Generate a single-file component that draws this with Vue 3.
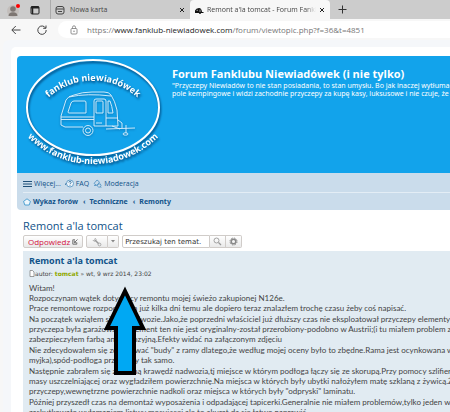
<template>
  <div class="browser">
    <header class="tab-strip">
      <button class="profile" type="button" aria-label="Profil">
        <svg viewBox="0 0 14 14" width="14" height="14">
          <circle cx="6" cy="8" r="6" fill="#c3bebb" />
          <circle cx="6" cy="6" r="2.800" fill="#7d7672" />
          <path d="M1.500 13q0-3.800 4.500-3.800t4.500 3.800z" fill="#7d7672" />
          <circle cx="11" cy="3" r="2" fill="#f00" />
        </svg>
      </button>
      <button class="workspaces" type="button" aria-label="Obszary robocze">
        <svg viewBox="0 0 10 10" width="10" height="10">
          <rect x="1" y="1.500" width="8" height="7.500" rx="1" fill="none" stroke="#222" />
          <path d="M1 2.500h8" stroke="#222" stroke-width="2" />
          <path d="M2.500 3v6" stroke="#222" stroke-width="1.500" />
        </svg>
      </button>
      <div class="tab">
        <svg viewBox="0 0 10 10" width="10" height="10">
          <rect x="1" y="1.500" width="8" height="7.500" rx="2" fill="none" stroke="#444" />
          <path d="M1 4h8M3 6.500h4" stroke="#444" />
        </svg>
        <span class="tab-title">Nowa karta</span>
        <button type="button" aria-label="Zamknij kartę">
          <svg viewBox="0 0 6 6" width="6" height="6"><path d="M1 1l4 4M5 1l-4 4" stroke="#222" /></svg>
        </button>
      </div>
      <div class="tab active">
        <svg viewBox="0 0 10 10" width="10" height="10">
          <path d="M1 8V5.500Q2 3 5 3q2.500 0 3 4h1.500v1H7a1 1 0 0 1-2 0H1z" fill="#111" />
          <path d="M2.500 5.300h1.500M6 4.500v2.500" stroke="#ddd" stroke-width=".7" />
        </svg>
        <span class="tab-title">Remont a'la tomcat - Forum Fankl</span>
        <button type="button" aria-label="Zamknij kartę">
          <svg viewBox="0 0 6 6" width="6" height="6"><path d="M1 1l4 4M5 1l-4 4" stroke="#222" /></svg>
        </button>
      </div>
      <button class="new-tab" type="button" aria-label="Nowa karta">
        <svg viewBox="0 0 9 9" width="9" height="9"><path d="M4.500 .5v8M.5 4.500h8" stroke="#333" /></svg>
      </button>
    </header>

    <div class="toolbar">
      <button class="back" type="button" aria-label="Wstecz">
        <svg viewBox="0 0 10 10" width="10" height="10">
          <path d="M9.500 5H1M4.800 1L.8 5l4 4" fill="none" stroke="#444" />
        </svg>
      </button>
      <button type="button" aria-label="Odśwież">
        <svg viewBox="0 0 10 10" width="10" height="10">
          <path d="M8.600 3A4.200 4.200 0 1 0 9.200 5M9 .5V3.300H6.200" fill="none" stroke="#444" />
        </svg>
      </button>
      <div class="address">
        <svg viewBox="0 0 8 10" width="8" height="10">
          <rect x="1" y="3.500" width="6" height="5.500" rx="1" fill="none" stroke="#777" stroke-width=".8" />
          <path d="M2.500 3.500V2.300a1.500 1.500 0 0 1 3 0v1.200" fill="none" stroke="#777" stroke-width=".8" />
          <circle cx="4" cy="6.200" r=".7" fill="#777" />
        </svg>
        <span>https://<b>www.fanklub-niewiadowek.com</b>/forum/viewtopic.php?f=36&amp;t=4851</span>
      </div>
    </div>

    <div class="page">
      <div class="wrap">
        <div class="headerbar">
          <a class="logo" href="#" aria-label="Wykaz forów">
            <svg viewBox="20 56 145 112" width="145" height="112">
              <defs>
                <path id="arc-top" d="M43 103A67 67 0 0 1 143 103" />
                <path id="arc-bottom" d="M24 133A92 92 0 0 0 162 133" />
              </defs>
              <g class="shadowed">
                <ellipse cx="93" cy="107.500" rx="66" ry="47.500" fill="none" stroke="#fff" stroke-width="2" />
                <text class="logo-text">
                  <textPath href="#arc-top" startOffset="50%">fanklub niewiadówek</textPath>
                </text>
                <text class="logo-text">
                  <textPath href="#arc-bottom" startOffset="50%">www.fanklub-niewiadowek.com</textPath>
                </text>
              </g>
              <g class="caravan" fill="none" stroke="#e2f4ff" stroke-width=".9">
                <path d="M61 125v-9l5-16q2-4 8-5 8-3 18-3h12q5 0 7 3 4 6 6 15l1 16H94M61 125l4 2h18" />
                <path d="M68 112l3-9q1-2 3-2h11q1 0 1 2v10H69q-1 0-1-1zM61 117h33M61 119.500h33M106 118h12" />
                <path d="M94 126v-25q0-2 2-2h8q2 0 2 2v25M96 113v-11q0-1 1-1h5q1 0 1 1v11zM96 123h6M108 113v-12h2q2 5 3 12z" />
                <path d="M69 97q18-4 42-1M118 120l4 3v5M106 129l29-1M112 126l8 3M126 125v8" />
                <circle cx="88" cy="130.500" r="5" />
                <circle cx="88" cy="130.500" r="2.500" />
                <ellipse cx="125.500" cy="134" rx="2.500" ry="1.200" />
              </g>
            </svg>
          </a>
          <div class="site-description">
            <h1>Forum Fanklubu Niewiadówek (i nie tylko)</h1>
            <p>
              "Przyczepy Niewiadów to nie stan posiadania, to stan umysłu. Bo jak inaczej wytłumac<br />
              pole kempingowe i widzi zachodnie przyczepy za kupę kasy, luksusowe i nie czuje, że
            </p>
          </div>
        </div>

        <nav class="navbar">
          <ul class="nav-main">
            <li>
              <a href="#">
                <svg viewBox="0 0 9 8" width="9" height="8"><path d="M0 1.500h9M0 4h9M0 6.500h9" stroke="#1f5079" /></svg>
                Więcej...
              </a>
            </li>
            <li>
              <a href="#">
                <svg viewBox="0 0 9 9" width="9" height="9">
                  <circle cx="5" cy="4.500" r="3.500" fill="#eef5fb" stroke="#4d8fc0" stroke-width=".8" />
                  <path d="M3.800 3.600q0-1.200 1.200-1.200t1.200 1q0 .7-1.200 1.300v.6M5 6v.8M1.200 4l-1 2" fill="none" stroke="#2b6b9c" stroke-width=".8" />
                </svg>
                FAQ
              </a>
            </li>
            <li>
              <a href="#">
                <svg viewBox="0 0 9 9" width="9" height="9">
                  <path d="M1 4.500l3-3.500 2.500 2L4 6.500zM1 6.500h2M5 5q3-1 3 1.500T5.500 8 5 5M7.500 8l1 .8" fill="none" stroke="#4d8fc0" stroke-width=".8" />
                </svg>
                Moderacja
              </a>
            </li>
          </ul>
          <ol class="breadcrumbs">
            <li v-for="(crumb, i) in crumbs" :key="crumb">
              <svg v-if="i === 0" viewBox="0 0 8 8" width="8" height="8">
                <path d="M4 .8L7.400 3.400 6.200 7H1.800L.6 3.400z" fill="#eef7fd" stroke="#2f8fc9" stroke-width=".8" />
              </svg>
              <span v-else class="sep">‹</span>
              <a href="#">{{ crumb }}</a>
            </li>
          </ol>
        </nav>

        <main>
          <h2><a href="#">Remont a'la tomcat</a></h2>

          <div class="action-bar">
            <button class="button reply" type="button">
              Odpowiedz
              <svg viewBox="0 0 6 6" width="6" height="6">
                <path d="M3 .8H.8v4.400h4V3.500M5.500 .5L2.500 3.500M2.300 1.500v2.200h2.200" fill="none" stroke="#666" stroke-width=".9" />
              </svg>
            </button>
            <div class="split">
              <button class="button tools" type="button" aria-label="Narzędzia tematu">
                <svg viewBox="0 0 10 10" width="10" height="10">
                  <path d="M3 3l4.500 4.500" stroke="#999" stroke-width="1.500" />
                  <path d="M1 3.200a1.700 1.700 0 0 0 3.200-.8M3.500 1.200L2.500 2.500" fill="none" stroke="#999" />
                  <circle cx="7.500" cy="7.500" r="1.400" fill="#eee" stroke="#999" stroke-width=".8" />
                </svg>
              </button>
              <button class="button caret" type="button" aria-label="Rozwiń">
                <svg viewBox="0 0 4 3" width="4" height="3"><path d="M0 0h4L2 2.500z" fill="#888" /></svg>
              </button>
            </div>
            <form class="search-box" @submit.prevent>
              <input v-model="query" type="text" aria-label="Szukaj" placeholder="Przeszukaj ten temat." />
              <button class="button" type="submit" aria-label="Szukaj">
                <svg viewBox="0 0 9 9" width="9" height="9">
                  <circle cx="3.500" cy="3.500" r="2.500" fill="none" stroke="#999" stroke-width=".9" />
                  <path d="M5.500 5.500l2.500 2.500" stroke="#999" stroke-width="1.300" />
                </svg>
              </button>
              <button class="button" type="button" aria-label="Wyszukiwanie zaawansowane">
                <svg viewBox="0 0 9 9" width="9" height="9">
                  <circle cx="4.500" cy="4.500" r="3.500" fill="none" stroke="#888" stroke-width="1" stroke-dasharray="1.600 1.150" />
                  <circle cx="4.500" cy="4.500" r="2.300" fill="none" stroke="#888" stroke-width="1.500" />
                </svg>
              </button>
            </form>
          </div>

          <article class="post">
            <h3><a href="#">Remont a'la tomcat</a></h3>
            <p class="author">
              <svg viewBox="0 0 6 7" width="6" height="7">
                <path d="M1 .5h2.500L5 2v4.500H1z" fill="#fff" stroke="#777" stroke-width=".7" />
              </svg>
              <span>autor: <a href="#">tomcat</a> » wt, 9 wrz 2014, 23:02</span>
            </p>
            <div class="content">
              <p v-for="(lines, i) in paragraphs" :key="i">
                <span v-for="line in lines" :key="line">{{ line }}</span>
              </p>
            </div>
          </article>
        </main>
      </div>
    </div>

    <svg class="arrow" viewBox="0 0 44 92" width="44" height="92">
      <path d="M22 6L40 43H31V88H13V43H4z" fill="#00a8f3" stroke="#000" stroke-width="4" />
    </svg>
  </div>
</template>

<script setup>
import { ref } from 'vue'

const query = ref('')

const crumbs = ['Wykaz forów', 'Techniczne', 'Remonty']

const paragraphs = [
  [
    'Witam!',
    'Rozpoczynam wątek dotyczący remontu mojej świeżo zakupionej N126e.',
    'Prace remontowe rozpocząłem już kilka dni temu ale dopiero teraz znalazłem trochę czasu żeby coś napisać.'
  ],
  [
    'Na początek wziąłem się za podwozie.Jako,że poprzedni właściciel już dłuższy czas nie eksploatował przyczepy elementy o',
    'przyczepa była garażowana. Element ten nie jest oryginalny-został przerobiony-podobno w Austrii;(i tu miałem problem zara',
    'zabezpieczyłem farbą antykorozyjną.Efekty widać na załączonym zdjęciu'
  ],
  [
    'Nie zdecydowałem się zdejmować "budy" z ramy dlatego,że według mojej oceny było to zbędne.Rama jest ocynkowana w B',
    'myjka),spód-podłoga przyczepy tak samo.'
  ],
  [
    'Następnie zabrałem się za dolną krawędź nadwozia,tj miejsce w którym podłoga łączy się ze skorupą.Przy pomocy szlifierki',
    'masy uszczelniającej oraz wygładziłem powierzchnię.Na miejsca w których były ubytki nałożyłem matę szklaną z żywicą.Ży',
    'przyczepy,wewnętrzne powierzchnie nadkoli oraz miejsca w których były "odpryski" laminatu.'
  ],
  [
    'Później przyszedł czas na demontaż wyposażenia i odpadającej tapicerki.Generalnie nie miałem problemów,tylko jeden wk',
    'zaskutkowało wyłamaniem listwy mocującej,ale to akurat da się łatwo naprawić.'
  ]
]
</script>

<style>
body {
  margin: 0;
  overflow: hidden;
}
</style>

<style scoped>
.browser {
  position: relative;
  height: 100vh;
  overflow: hidden;
  background: #f7f7f7;
  color: #444;
  font-family: 'Open Sans', sans-serif;
  white-space: nowrap;
}

button {
  display: flex;
  align-items: center;
  justify-content: center;
  padding: 0;
  border: 0;
  background: none;
  font-family: inherit;
  flex-shrink: 0;
}

svg {
  flex-shrink: 0;
}

a {
  color: inherit;
  text-decoration: none;
}

h1,
h2,
h3,
p,
ul,
ol {
  margin: 0;
  padding: 0;
  list-style: none;
}

.tab-strip {
  display: flex;
  align-items: center;
  height: 19px;
  background: #ccc;
}

.profile {
  margin-left: 7px;
}

.workspaces {
  margin: 0 10px 0 9px;
}

.tab {
  display: flex;
  align-items: center;
  gap: 5px;
  width: 140px;
  height: 19px;
  padding: 0 5px 0 4px;
  box-sizing: border-box;
  border-left: 1px solid #aaa;
  font-size: 7px;
}

.tab.active {
  gap: 3px;
  border-left: 0;
  border-radius: 4px 4px 0 0;
  background: #f7f7f7;
}

.tab-title {
  flex: 1;
  overflow: hidden;
}

.active .tab-title {
  mask-image: linear-gradient(to right, #000 90%, transparent);
}

.new-tab {
  margin-left: 8px;
}

.toolbar {
  display: flex;
  align-items: center;
  gap: 11px;
  height: 21px;
  padding-left: 11px;
}

.back {
  margin-right: 5px;
}

.address {
  display: flex;
  flex: 1;
  align-items: center;
  gap: 9px;
  height: 17px;
  padding-left: 12px;
  border-radius: 9px 0 0 9px;
  background: #fff;
  color: #777;
  font-size: 8px;
}

.address b {
  color: #222;
  font-weight: 400;
}

.page {
  margin-left: 3px;
  padding: 7px 0 0 8px;
  border-radius: 6px 0 0;
  background: #f5f7fa;
}

.wrap {
  padding: 9px 0 0 6px;
  border-radius: 5px 0 0;
  background: #fff;
}

.headerbar {
  display: flex;
  height: 117px;
  border-radius: 4px 0 0;
  background: #12a3eb;
  color: #fff;
}

.logo {
  margin-left: 3px;
}

.shadowed {
  filter: drop-shadow(1px 2px 1px #004a80);
}

.caravan {
  filter: drop-shadow(0 1px 1px #0a6fae);
}

.logo-text {
  fill: #fff;
  font-size: 9px;
  font-weight: 700;
  text-anchor: middle;
}

.site-description {
  margin-left: 7px;
  padding-top: 10px;
}

h1 {
  font-size: 11px;
  line-height: 16px;
}

.site-description p {
  font-family: 'Noto Sans', sans-serif;
  font-size: 7px;
  line-height: 8px;
}

.navbar {
  padding-left: 6px;
  border-radius: 0 0 0 4px;
  background: #cadceb;
  color: #105289;
  font-size: 7px;
}

.nav-main,
.breadcrumbs {
  display: flex;
  align-items: center;
  height: 17px;
}

.nav-main {
  gap: 4px;
  padding-top: 2px;
  border-bottom: 1px solid #e3edf5;
}

.nav-main a,
.breadcrumbs li {
  display: flex;
  align-items: center;
  gap: 2px;
}

.breadcrumbs {
  font-family: 'Noto Sans', sans-serif;
  font-weight: 700;
}

.sep {
  padding: 0 2px 0 5px;
}

main {
  padding: 7px 0 0 6px;
}

h2 {
  color: #105289;
  font-size: 11px;
  font-weight: 400;
  line-height: 18px;
}

.action-bar {
  display: flex;
  gap: 3px;
  margin-bottom: 3px;
}

.button {
  height: 13px;
  padding: 0 4px;
  box-sizing: border-box;
  border: 1px solid #d0ccc9;
  border-radius: 2px;
  background: linear-gradient(#fff, #e9e9e9);
}

.reply {
  gap: 2px;
  color: #d31141;
  font-size: 8px;
}

.split,
.search-box {
  display: flex;
}

.tools {
  padding: 0 5px;
  border-radius: 2px 0 0 2px;
}

.caret {
  padding: 0 3px;
  border-left: 0;
  border-radius: 0 2px 2px 0;
}

.search-box input {
  width: 88px;
  height: 13px;
  padding: 0 2px;
  box-sizing: border-box;
  border: 1px solid #d0ccc9;
  border-radius: 2px 0 0 2px;
  background: #fff;
  font-family: 'DejaVu Sans', sans-serif;
  font-size: 7px;
}

.search-box input::placeholder {
  color: #333;
}

.search-box .button {
  padding: 0 3px;
  border-left: 0;
  border-radius: 0;
}

.search-box .button:last-child {
  border-radius: 0 2px 2px 0;
}

.post {
  padding: 2px 0 0 6px;
  background: #e1ebf2;
}

h3 {
  color: #105289;
  font-size: 9px;
  line-height: 15px;
}

.author {
  display: flex;
  align-items: center;
  height: 10px;
  margin-bottom: 5px;
  font-family: 'DejaVu Sans', sans-serif;
  font-size: 6px;
}

.author a {
  color: #8fa800;
  font-weight: 700;
}

.content {
  display: flex;
  flex-direction: column;
  gap: 1px;
  font-family: Lato, sans-serif;
  font-size: 8px;
  line-height: 10px;
}

.content span {
  display: block;
}

/* pointer drawn over the post */
.arrow {
  position: absolute;
  top: 285px;
  left: 103px;
}
</style>
